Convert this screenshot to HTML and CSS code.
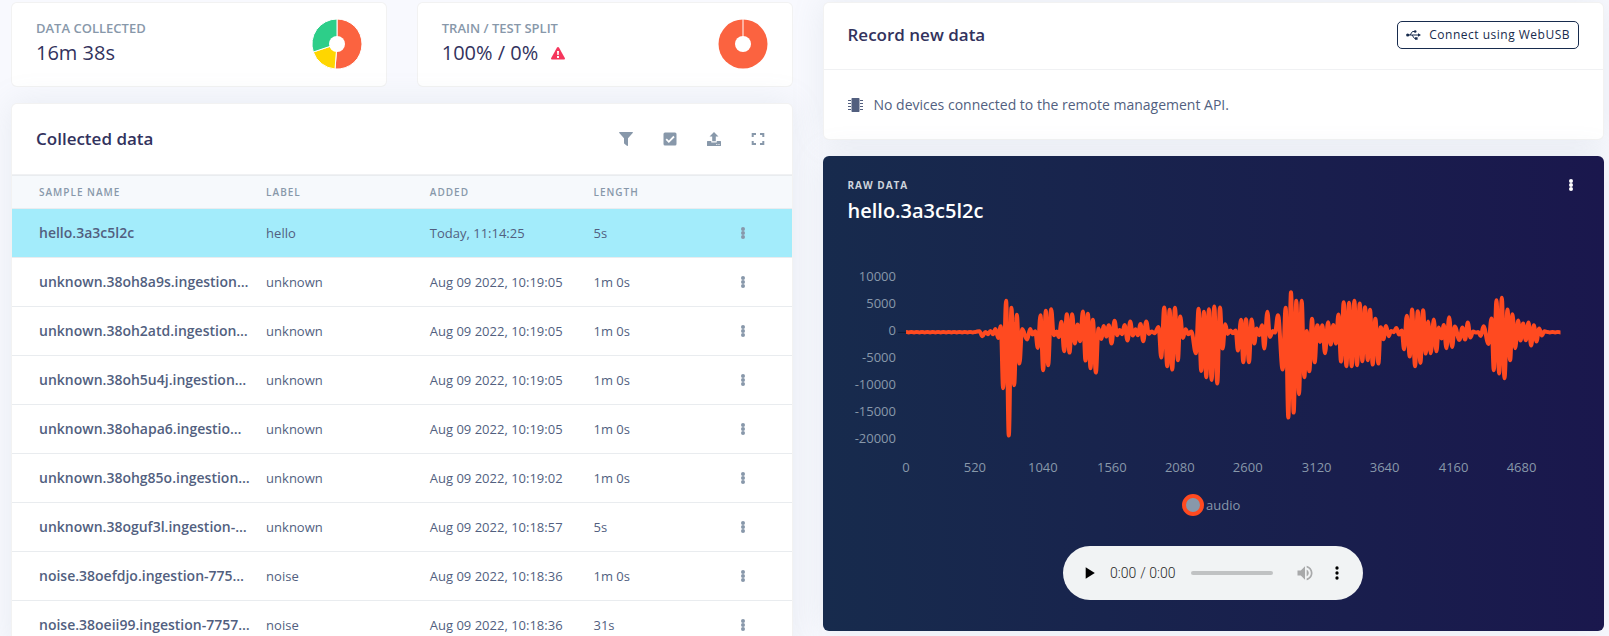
FILE: index.html
```html
<!DOCTYPE html>
<html lang="en">
<head>
<meta charset="utf-8">
<title>Data acquisition</title>
<link rel="stylesheet" href="styles.css">
</head>
<body>
<svg class="sprite" aria-hidden="true">
  <symbol id="dots" viewBox="0 0 4 12"><circle cx="2" cy="2" r="2"/><circle cx="2" cy="6" r="2"/><circle cx="2" cy="10" r="2"/></symbol>
</svg>
<main class="page">
  <div class="column">
    <div class="stats">
      <section class="card stat">
        <div>
          <h2 class="stat-label">DATA COLLECTED</h2>
          <p class="stat-value">16m 38s</p>
        </div>
        <svg class="pie" viewBox="-25 -25 50 50" role="img" aria-label="Data per label">
          <g stroke="#fff" stroke-width="1">
            <path fill="#fb6340" d="M0-25A25 25 0 0 1 25 0A25 25 0 0 1-2 25L0 0Z"/>
            <path fill="#ffd600" d="M-2 25A25 25 0 0 1-23.7 8L0 0Z"/>
            <path fill="#2dce89" d="M-23.7 8A25 25 0 0 1 0-25L0 0Z"/>
          </g>
          <circle r="8" fill="#fff"/>
        </svg>
      </section>
      <section class="card stat">
        <div>
          <h2 class="stat-label">TRAIN / TEST SPLIT</h2>
          <p class="stat-value">100% / 0%
            <svg class="warn" viewBox="0 0 14 13" role="img" aria-label="Warning"><path fill="#f5365c" d="M7 0Q7.7 0 8.1.7L13.8 11Q14.4 12.5 13 12.6H1Q-.4 12.5.2 11L5.9.7Q6.3 0 7 0Z"/><path fill="#fff" d="M6 4h2l-.3 4H6.300ZM6 9h2v2H6Z"/></svg>
          </p>
        </div>
        <svg class="pie" viewBox="-25 -25 50 50" role="img" aria-label="Train and test split">
          <circle r="24.500" fill="#fb6340"/><path d="M0-25V0" stroke="#fff"/><circle r="8" fill="#fff"/>
        </svg>
      </section>
    </div>
    <section class="card samples">
      <header class="samples-head">
        <h3 class="title">Collected data</h3>
        <div class="tools">
          <button class="tool" aria-label="Filter"><svg viewBox="0 0 14 14"><path d="M.6 0H13.400Q14.300.4 13.700 1.100L9 6.200V13.400Q8.600 14.200 7.900 13.700L5.400 11.800Q5 11.500 5 11V6.200L.3 1.100Q-.2.3.6 0Z"/></svg></button>
          <button class="tool" aria-label="Select"><svg viewBox="0 0 14 14"><rect x=".5" y=".5" width="13" height="13" rx="1.500"/><path d="M3.200 7.200 5.800 9.800 11 4.500" fill="none" stroke="#fff" stroke-width="1.800"/></svg></button>
          <button class="tool" aria-label="Upload"><svg viewBox="0 0 14 14"><path d="M7 0 11.500 4.500H8.800V9.300H5.200V4.500H2.500ZM.6 9H4.300V10.400H9.700V9H13.400Q14 9 14 9.600V13.400Q14 14 13.400 14H.6Q0 14 0 13.400V9.600Q0 9 .6 9ZM9.300 12V13H10.300V12ZM11.500 12V13H12.500V12Z" fill-rule="evenodd"/></svg></button>
          <button class="tool" aria-label="Full screen"><svg viewBox="0 0 14 14"><path d="M1.700 5V1.900H5M9 1.900H12.300V5M12.300 9V12.100H9M5 12.100H1.700V9" fill="none" stroke="#8898aa" stroke-width="2"/></svg></button>
        </div>
      </header>
      <table class="table">
        <thead>
          <tr><th class="c-name">SAMPLE NAME</th><th class="c-mid">LABEL</th><th class="c-mid">ADDED</th><th>LENGTH</th><th class="c-menu" aria-label="Actions"></th></tr>
        </thead>
        <tbody>
          <tr class="selected"><td class="name">hello.3a3c5l2c</td><td>hello</td><td>Today, 11:14:25</td><td>5s</td><td><button class="more" aria-label="More"><svg><use href="#dots"/></svg></button></td></tr>
          <tr><td class="name">unknown.38oh8a9s.ingestion…</td><td>unknown</td><td>Aug 09 2022, 10:19:05</td><td>1m 0s</td><td><button class="more" aria-label="More"><svg><use href="#dots"/></svg></button></td></tr>
          <tr><td class="name">unknown.38oh2atd.ingestion…</td><td>unknown</td><td>Aug 09 2022, 10:19:05</td><td>1m 0s</td><td><button class="more" aria-label="More"><svg><use href="#dots"/></svg></button></td></tr>
          <tr><td class="name">unknown.38oh5u4j.ingestion…</td><td>unknown</td><td>Aug 09 2022, 10:19:05</td><td>1m 0s</td><td><button class="more" aria-label="More"><svg><use href="#dots"/></svg></button></td></tr>
          <tr><td class="name">unknown.38ohapa6.ingestio…</td><td>unknown</td><td>Aug 09 2022, 10:19:05</td><td>1m 0s</td><td><button class="more" aria-label="More"><svg><use href="#dots"/></svg></button></td></tr>
          <tr><td class="name">unknown.38ohg85o.ingestion…</td><td>unknown</td><td>Aug 09 2022, 10:19:02</td><td>1m 0s</td><td><button class="more" aria-label="More"><svg><use href="#dots"/></svg></button></td></tr>
          <tr><td class="name">unknown.38oguf3l.ingestion-…</td><td>unknown</td><td>Aug 09 2022, 10:18:57</td><td>5s</td><td><button class="more" aria-label="More"><svg><use href="#dots"/></svg></button></td></tr>
          <tr><td class="name">noise.38oefdjo.ingestion-775…</td><td>noise</td><td>Aug 09 2022, 10:18:36</td><td>1m 0s</td><td><button class="more" aria-label="More"><svg><use href="#dots"/></svg></button></td></tr>
          <tr><td class="name">noise.38oeii99.ingestion-7757…</td><td>noise</td><td>Aug 09 2022, 10:18:36</td><td>31s</td><td><button class="more" aria-label="More"><svg><use href="#dots"/></svg></button></td></tr>
        </tbody>
      </table>
    </section>
  </div>

  <div class="column">
    <section class="card">
      <header class="record-head">
        <h3 class="title">Record new data</h3>
        <button class="usb"><svg viewBox="0 0 15 10"><g fill="none" stroke="#172b4d"><path d="M1 5H12M4 5 6.500 1.500H9M6 5 8.500 8.500H10"/></g><g fill="#172b4d"><circle cx="1.700" cy="5" r="1.600"/><circle cx="9.200" cy="1.500" r="1.300"/><path d="M9 7.200h2.600v2.500H9ZM12 3.300 15 5 12 6.700Z"/></g></svg>Connect using WebUSB</button>
      </header>
      <p class="record-body"><svg viewBox="0 0 15 14"><rect x="3.500" width="8" height="14" rx=".7"/><path d="M0 2.500H3M0 5.500H3M0 8.500H3M0 11.500H3M12 2.500H15M12 5.500H15M12 8.500H15M12 11.500H15" stroke="#525f7f" stroke-width="1"/></svg>No devices connected to the remote management API.</p>
    </section>
    <section class="card raw">
      <header class="raw-head">
        <div>
          <p class="raw-label">RAW DATA</p>
          <h3 class="raw-title">hello.3a3c5l2c</h3>
        </div>
        <button class="more" aria-label="More"><svg><use href="#dots"/></svg></button>
      </header>
      <svg class="chart" viewBox="0 0 732 220" role="img" aria-label="Audio waveform">
        <g text-anchor="end">
          <text x="48" y="20">10000</text><text x="48" y="47">5000</text><text x="48" y="74">0</text><text x="48" y="101">-5000</text><text x="48" y="128">-10000</text><text x="48" y="155">-15000</text><text x="48" y="182">-20000</text>
        </g>
        <g text-anchor="middle">
          <text x="58" y="211">0</text><text x="127" y="211">520</text><text x="195" y="211">1040</text><text x="264" y="211">1560</text><text x="332" y="211">2080</text><text x="400" y="211">2600</text><text x="469" y="211">3120</text><text x="537" y="211">3640</text><text x="606" y="211">4160</text><text x="674" y="211">4680</text>
        </g>
        <path class="zero" d="M50 71.500H58"/>
        <path id="wave" class="wave" transform="translate(-8 -.5) scale(.33380)"/>
      </svg>
      <div class="legend"><span class="legend-dot"></span>audio</div>
      <audio class="player" controls preload="none" src="data:audio/wav;base64,UklGRiQAAABXQVZFZm10IBAAAAABAAEAgD4AAAB9AAACABAAZGF0YQAAAAA="></audio>
    </section>
  </div>
</main>
<script src="wave.js"></script>
</body>
</html>
```
FILE: styles.css
```css
* { box-sizing: border-box; }
body {
  margin: 0;
  background: #f8f9fe;
  color: #525f7f;
  font-family: "Open Sans", sans-serif;
  font-size: 14px;
  font-weight: 400;
  line-height: 20px;
}
h2, h3, p { margin: 0; }
button { font: inherit; background: none; border: 0; padding: 0; color: inherit; }
.sprite { position: absolute; width: 0; height: 0; }
.page {
  display: grid;
  grid-template-columns: minmax(0, 1fr) minmax(0, 1fr);
  align-items: start;
  gap: 30px;
  padding: 2px 5px 0 11px;
  height: 100vh;
  overflow: hidden;
}
.column { display: flex; flex-direction: column; gap: 16px; }
.card {
  background: #fff;
  border: 1px solid rgba(0, 0, 0, .05);
  border-radius: 6px;
  box-shadow: 0 0 32px rgba(136, 152, 170, .15);
}
.stats { display: grid; grid-template-columns: 1fr 1fr; gap: 30px; }
.stat {
  display: flex;
  justify-content: space-between;
  align-items: center;
  padding: 15px 24px 17px;
  height: 85px;
  box-shadow: none;
}
.stat-label { font-size: 13px; line-height: 18px; font-weight: 600; color: #8898aa; }
.stat-value { font-size: 20px; line-height: 32px; font-weight: 500; color: #32325d; }
.pie { width: 50px; height: 50px; }
.warn { width: 14px; height: 13px; margin-left: 8px; }
.title { font-size: 17px; line-height: 26px; font-weight: 600; color: #32325d; }
.samples-head {
  display: flex;
  justify-content: space-between;
  align-items: center;
  height: 71px;
  padding: 0 24px;
  border-bottom: 1px solid #f0f1f3;
}
.tools { display: flex; gap: 30px; padding-right: 3px; }
.tool { width: 14px; height: 14px; }
.tool svg { display: block; width: 14px; height: 14px; fill: #8898aa; }
.table { width: 100%; border-collapse: collapse; table-layout: fixed; }
.table th {
  height: 33px;
  padding: 0;
  background: #f6f9fc;
  border: solid #e9ecef;
  border-width: 1px 0;
  color: #8898aa;
  font-size: 10px;
  font-weight: 600;
  letter-spacing: 1px;
  text-align: left;
}
.table td {
  height: 49px;
  padding: 0;
  border-bottom: 1px solid #e9ecef;
  font-size: 13px;
  white-space: nowrap;
}
.table .c-name { width: 32.6%; }
.c-mid { width: 21%; }
.c-menu { width: 7%; }
.table th:first-child, .table td:first-child { padding-left: 27px; }
.table .name { font-size: 14px; font-weight: 600; overflow: hidden; text-overflow: ellipsis; }
.selected { background: #a3ecfb; }
.more { display: block; width: 12px; height: 12px; color: #8898aa; }
.more svg { display: block; width: 4px; height: 12px; margin: 0 auto; fill: currentColor; }
.record-head {
  display: flex;
  justify-content: space-between;
  align-items: center;
  height: 67px;
  padding: 0 24px 2px;
  border-bottom: 1px solid #f0f1f3;
}
.usb {
  display: flex;
  align-items: center;
  gap: 8px;
  height: 28px;
  padding: 0 8px;
  border: 1px solid #172b4d;
  border-radius: 5px;
  color: #172b4d;
  font-size: 12px;
  letter-spacing: .5px;
}
.usb svg { width: 15px; height: 10px; }
.record-body { display: flex; align-items: center; gap: 11px; padding: 25px 24px 24px; }
.record-body svg { width: 15px; height: 14px; fill: #525f7f; }
.raw {
  display: flex;
  flex-direction: column;
  padding: 18px 25px 31px;
  border: 0;
  background: linear-gradient(87deg, #172b4d 0, #1a174d 100%);
}
.raw-head { display: flex; justify-content: space-between; align-items: start; padding: 0 2px 0 0; }
.raw-label { color: #ced4dc; font-size: 10px; line-height: 22px; font-weight: 700; letter-spacing: 1px; }
.raw-title { color: #fff; font-size: 20px; line-height: 30px; font-weight: 600; }
.raw .more { margin-top: 5px; color: #fff; }
.chart { display: block; width: 100%; margin-top: 35px; font-size: 13px; fill: #8898aa; }
.zero { stroke: #0d1b33; }
.wave { fill: none; stroke: #ff4a20; stroke-width: 12; stroke-linejoin: round; }
.legend { display: flex; justify-content: center; align-items: center; gap: 2px; height: 22px; margin-top: 13px; padding-right: 4px; color: #8898aa; font-size: 13px; }
.legend-dot { width: 22px; height: 22px; border: 4px solid #ff4a20; border-radius: 50%; background: #8898aa; }
.player { display: block; width: 300px; height: 54px; margin: 30px auto 0; }
.player::-webkit-media-controls-current-time-display,
.player::-webkit-media-controls-time-remaining-display { font-weight: 300; }
```
FILE: wave.js
```js
// Outline extremes of the waveform, as x, y pairs in thirds of a pixel.
const peaks = [
  418,206,427,233,436,208,443,227,451,205,459,227,466,199,474,238,482,191,489,389,498,115,506,531,
  514,136,522,380,530,157,538,315,546,199,561,243,570,199,577,228,585,206,593,268,601,158,609,335,
  617,145,624,320,633,140,641,230,649,207,656,236,664,178,672,278,680,155,688,282,696,155,704,255,
  712,186,720,248,728,147,736,306,743,154,751,329,758,172,767,342,775,198,783,241,791,190,798,234,
  806,188,814,255,823,175,831,230,838,202,846,227,853,187,862,246,870,177,878,231,886,200,893,230,
  901,184,909,248,918,177,926,226,934,207,943,224,955,193,963,297,972,135,981,323,988,142,996,333,
  1004,136,1013,305,1020,162,1028,238,1036,200,1044,227,1053,207,1067,284,1075,139,1083,337,
  1091,148,1098,356,1106,140,1114,364,1122,132,1131,375,1139,135,1147,270,1155,185,1162,226,
  1170,204,1178,224,1186,204,1193,276,1202,172,1209,311,1217,170,1226,311,1234,171,1242,255,
  1249,198,1257,230,1265,188,1272,270,1281,148,1289,235,1297,205,1304,222,1313,158,1327,333,
  1336,136,1344,477,1352,89,1360,462,1368,115,1376,407,1384,115,1392,356,1399,205,1407,338,
  1415,169,1423,311,1431,188,1439,250,1446,188,1454,284,1463,179,1471,258,1479,187,1487,255,
  1494,156,1502,309,1510,119,1518,323,1526,121,1534,323,1542,115,1550,320,1558,123,1566,308,
  1574,134,1582,305,1589,142,1597,318,1605,169,1614,315,1621,194,1629,242,1637,190,1645,233,
  1652,205,1660,221,1668,196,1676,228,1684,204,1691,272,1699,160,1708,294,1715,141,1724,323,
  1732,146,1740,313,1748,143,1756,285,1763,177,1771,284,1780,171,1788,278,1795,195,1803,240,
  1810,187,1818,269,1826,164,1835,265,1843,192,1857,244,1866,195,1874,243,1882,180,1890,237,
  1898,207,1906,222,1913,208,1921,232,1929,191,1944,256,1953,168,1960,335,1968,113,1976,345,
  1984,106,1992,359,2001,141,2009,305,2016,155,2024,269,2033,174,2040,246,2048,183,2056,245,
  2064,180,2072,261,2080,188,2088,249,2096,198,2104,231,2112,206
];
const HALF_STROKE = 6;
const points = [];
const ripple = (from, to) => {
  for (let x = from, up = true; x < to; x += 8, up = !up) points.push([x, up ? 214 : 216]);
};
ripple(198, 412);
for (let i = 0; i < peaks.length; i += 2) {
  const y = peaks[i + 1];
  points.push([peaks[i], y < 215 ? y + HALF_STROKE : y - HALF_STROKE]);
}
ripple(2120, 2168);

// Join the extremes with curves that are level at each one.
let path = `M${points[0]}`;
for (let i = 1; i < points.length; i++) {
  const [x0, y0] = points[i - 1];
  const [x1, y1] = points[i];
  const bend = (x1 - x0) * 0.4;
  path += `C${x0 + bend},${y0} ${x1 - bend},${y1} ${x1},${y1}`;
}
document.getElementById("wave").setAttribute("d", path);
```
